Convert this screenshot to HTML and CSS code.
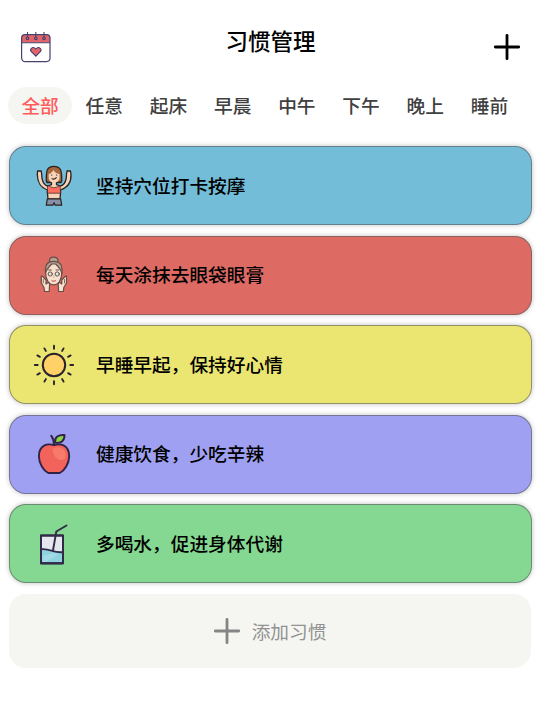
FILE: index.html
```html
<!DOCTYPE html>
<html lang="zh-CN">
     <head>
          <meta http-equiv="Content-type" content="text/html; charset=utf-8">
          <title>习惯管理</title>
          <link rel="stylesheet" href="styles.css">
     </head>
     <body>
          <div class="header">
               <svg class="calendar" viewBox="0 0 32 34">
                    <rect x="1.6" y="4.6" width="28.4" height="27" rx="3.5" fill="#fff"/>
                    <path d="M1.6 12.5V8q0-3.4 3.4-3.4h21.6q3.4 0 3.4 3.4v4.5z" fill="#e2646a"/>
                    <rect x="1.6" y="4.6" width="28.4" height="27" rx="3.5" fill="none" stroke="#45426c" stroke-width="1.2"/>
                    <path d="M1.6 12.7h28.4M7.5 2v5M15.8 2v5M24 2v5" stroke="#45426c" stroke-width="1.1"/>
                    <g fill="#e2646a" stroke="#45426c" stroke-width="1.1">
                         <circle cx="7.5" cy="8.3" r="1.3"/>
                         <circle cx="15.8" cy="8.3" r="1.3"/>
                         <circle cx="24" cy="8.3" r="1.3"/>
                         <path d="M15.8 26.2l-4.7-4.7c-1.7-2.4 1.6-5.8 4.7-2.6 3.1-3.2 6.4.2 4.7 2.6z"/>
                    </g>
               </svg>
               <div class="title">习惯管理</div>
               <svg class="plus" viewBox="0 0 28 28"><path d="M14 2.3v23.4M2.3 14h23.4"/></svg>
          </div>
          <div class="tabs">
               <div class="tab active">全部</div>
               <div class="tab">任意</div>
               <div class="tab">起床</div>
               <div class="tab">早晨</div>
               <div class="tab">中午</div>
               <div class="tab">下午</div>
               <div class="tab">晚上</div>
               <div class="tab">睡前</div>
          </div>
          <div class="list">
               <div class="card blue">
                    <svg class="icon" viewBox="0 0 42 42" stroke-linecap="round" stroke-linejoin="round">
                         <path d="M14 17.500c-1.500-2-.5-5-.5-8.500C13.500 4 16 1.300 20.800 1.300S28.500 4 28.500 9c0 3.500 1.200 6.500-.5 8.500z" fill="#a5683e" stroke="#2b211f" stroke-width="1.300"/>
                         <path d="M18.500 15.500v4.200L14.500 21C10.500 20 9.700 16.500 9 13.500L8.700 9.500 8.200 6H4.600L4.300 9.500C4.500 16 6 22 14.500 25v3.500l.5 5.500h12l.5-5.500V25C36 22 38.300 16 38 9.500L37.500 6H34l-.5 3.500-.3 4C32.500 17 31.500 20 27.500 21l-4-1.300v-4.200z" fill="#f8d3b7" stroke="#2b211f" stroke-width="1.300"/>
                         <path d="M15.700 9c2.300-.5 3.700-2 4.600-4 1.300 2.200 3.300 3.500 6.200 4v3.500c0 3.200-2.400 5.200-5.400 5.200s-5.400-2-5.400-5.200z" fill="#f8d3b7"/>
                         <path d="M18.500 10h.2M23.500 10h.2M19 13.700q2.300 1.200 4.300-1" fill="none" stroke="#2b211f" stroke-width="1.100"/>
                         <path d="M15 20.500q5.800 4.500 12 0l.7 7.700H14.500z" fill="#ff6d5d" stroke="#2b211f" stroke-width=".7"/>
                         <path d="M14.300 34h13.400l1 6.200h-6.500L21 37.700l-1.200 2.500h-6.500z" fill="#8490a7" stroke="#2b211f" stroke-width="1.200"/>
                    </svg>
                    <div class="name">坚持穴位打卡按摩</div>
               </div>
               <div class="card red">
                    <svg class="icon" viewBox="0 0 42 42" stroke="#674e45" stroke-width="1.200" stroke-linejoin="round" stroke-linecap="round">
                         <path d="M16.500 9V6.500q0-3.300 4.200-3.300t4.200 3.300V9z" fill="#b3a095"/>
                         <path d="M12.500 19.500V15c0-5 3-7.700 8.200-7.700S29 10 29 15v4.500z" fill="#b3a095"/>
                         <path d="M12.700 19.500c0-3.500 3-6.500 6-9.500h4c3 3 6 6 6 9.500 0 5.500-3 11.300-8 11.300s-8-5.800-8-11.300z" fill="#f8e0d0"/>
                         <circle cx="17.200" cy="20" r="2.100" fill="#dce8df" stroke-width="1"/>
                         <circle cx="24.200" cy="20" r="2.100" fill="#dce8df" stroke-width="1"/>
                         <path d="M15.700 16h2.700M23 16h2.700" fill="none" stroke-width="1"/>
                         <path d="M20.700 21.500v2" fill="none" stroke="#cfa894" stroke-width=".8"/>
                         <path d="M19 26.700q1.700 1 3.400 0" fill="none" stroke="#c76d65"/>
                         <path d="M8.300 22v7l2.700 4.500.5 4h4.700l.4-7q0-2.500-2.300-1.500l-1.300 1V26L9.800 22.500zM33.500 22v7l-2.700 4.500-.5 4h-4.700l-.4-7q0-2.500 2.300-1.500l1.300 1V26l3.200-3.500z" fill="#f8e0d0"/>
                         <path d="M10.300 25.500v3.500M31.500 25.500v3.500" fill="none" stroke-width=".8"/>
                    </svg>
                    <div class="name">每天涂抹去眼袋眼膏</div>
               </div>
               <div class="card yellow">
                    <svg class="icon" viewBox="0 0 42 42" stroke="#28222f" stroke-linecap="round">
                         <circle cx="21" cy="21" r="11.200" fill="#ffd166" stroke-width="2"/>
                         <g stroke-width="1.900">
                              <path id="ray" d="M21 1.800v2.900M21 37.300v2.900M1.800 21h2.900M37.300 21h2.900"/>
                              <use href="#ray" transform="rotate(30 21 21)"/>
                              <use href="#ray" transform="rotate(60 21 21)"/>
                         </g>
                    </svg>
                    <div class="name">早睡早起，保持好心情</div>
               </div>
               <div class="card purple">
                    <svg class="icon" viewBox="0 0 42 42" stroke="#302347" stroke-width="1.900" stroke-linejoin="round" stroke-linecap="round">
                         <path d="M21 12c-3.500-.8-7-.8-9.500.3C7.500 14.300 5.800 18.500 5.900 23.500c.2 7 4.500 14 9.300 16.500h11.600c4.800-2.500 9.200-9.500 9.400-16.500.1-5-1.600-9.200-5.700-11.200-2.500-1.100-6-1.100-9.500-.3z" fill="#f2645b"/>
                         <path d="M19.500 16c3-2.500 9.500-2.500 12.500 2.500 1.500 5 0 8-2.500 8.500-5 .8-9.500-3.500-10-11z" fill="#f77a6b" stroke="none"/>
                         <path d="M21 12c0-4-1-7-2.800-9.300" fill="none"/>
                         <path d="M22 9.500C21.500 4 25.500 1.500 31.500 2c.2 5-3 9-9.500 7.500z" fill="#8bd348"/>
                    </svg>
                    <div class="name">健康饮食，少吃辛辣</div>
               </div>
               <div class="card green">
                    <svg class="icon" viewBox="0 0 42 42" stroke="#322a48" stroke-width="1.900" stroke-linejoin="round" stroke-linecap="round">
                         <path d="M8 12.500h22v27.800H8z" fill="#e4e8ee"/>
                         <path d="M8 26.300c5-.8 9 1 12 1.900 3 .8 6 1.300 10 .8v11.300H8z" fill="#8dd2de"/>
                         <path d="M10 33l10-3 6 .8-12 8h-4z" fill="#a0dae4" stroke="none"/>
                         <path d="M20 27.500l3.300-19L33.500 2.500" fill="none"/>
                         <path d="M8 12.500h22v27.800H8z" fill="none"/>
                    </svg>
                    <div class="name">多喝水，促进身体代谢</div>
               </div>
          </div>
          <div class="add">
               <svg class="plus" viewBox="0 0 28 28"><path d="M14 2.300v23.400M2.300 14h23.400"/></svg>
               <div class="add-text">添加习惯</div>
          </div>
     </body>
</html>
```
FILE: styles.css
```css
*{
     box-sizing: border-box;
}
body{
     margin: 0;
     height: 720px;
     overflow: hidden;
     background-color: #fff;
     font-family: "Noto Sans CJK SC", sans-serif;
     color: #000;
}
.header{
     display: grid;
     grid-template-columns: 32px 1fr 28px;
     align-items: center;
     height: 87px;
     padding: 6px 19px 0 20px;
}
.calendar{
     width: 32px;
     height: 34px;
}
.title{
     padding: 0 4px 14px 0;
     text-align: center;
     font-size: 22.500px;
     line-height: 32px;
     font-weight: 500;
}
.plus{
     width: 28px;
     height: 28px;
     fill: none;
     stroke: #000;
     stroke-width: 2.800;
     stroke-linecap: round;
}
.tabs{
     display: flex;
     height: 37px;
     padding-left: 8px;
}
.tab{
     width: 64.200px;
     border-radius: 19px;
     text-align: center;
     font-size: 18.700px;
     line-height: 35px;
     font-weight: 500;
     color: #404040;
}
.tab.active{
     background-color: #f5f6f1;
     color: #ff5b5b;
}
.list{
     display: flex;
     flex-direction: column;
     gap: 10.500px;
     padding: 22px 8px 0 9px;
}
.card{
     display: flex;
     align-items: center;
     height: 79px;
     padding-left: 23px;
     border: 1px solid rgba(90, 90, 90, .6);
     border-radius: 17px;
     box-shadow: 0 0 5px rgba(0, 0, 0, .25);
}
.blue{
     background-color: #73bdd9;
}
.red{
     background-color: #de6a64;
}
.yellow{
     background-color: #ebe672;
}
.purple{
     background-color: #9fa0f2;
}
.green{
     background-color: #85d891;
}
.icon{
     width: 42px;
     height: 42px;
     margin-right: 21px;
}
.name{
     padding-bottom: 2px;
     font-size: 18.700px;
     line-height: 28px;
     font-weight: 500;
}
.add{
     display: flex;
     justify-content: center;
     align-items: center;
     gap: 11px;
     height: 74px;
     margin: 11px 9px 0;
     border-radius: 17px;
     background-color: #f5f6f1;
     font-size: 18.700px;
     color: #929292;
}
.add .plus{
     stroke: #858585;
}
.add-text{
     padding: 0 1px 2px 0;
}
```
